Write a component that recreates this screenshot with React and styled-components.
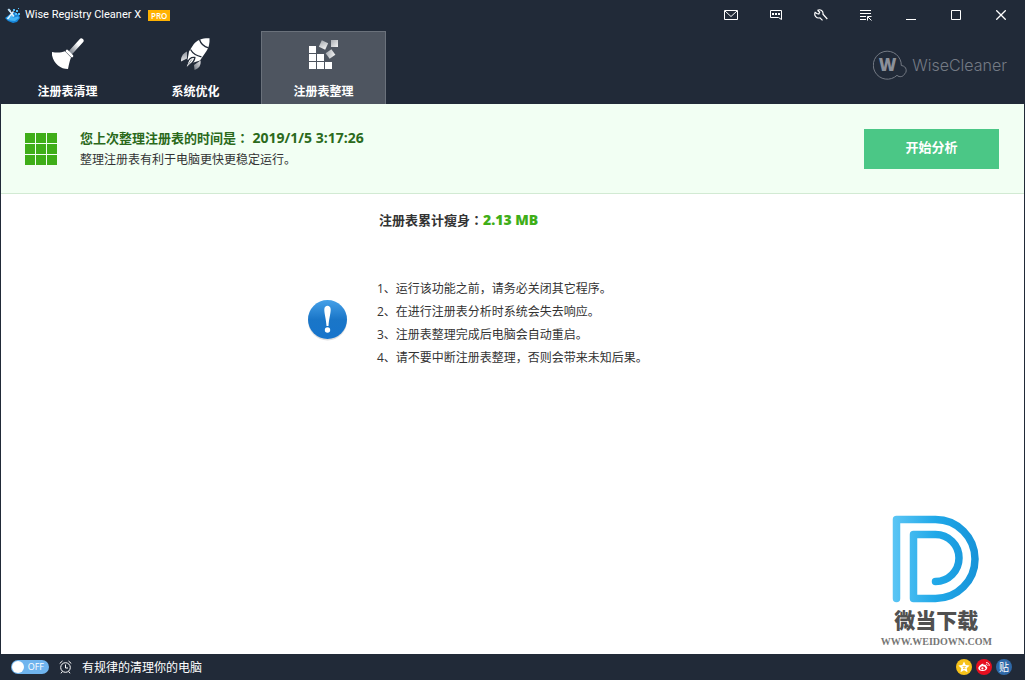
import { useState } from "react";
import styled, { createGlobalStyle } from "styled-components";

const GlobalStyle = createGlobalStyle`
  :root {
    --color-navy: #212a38;
    --color-navy-light: #4e5560;
    --color-mint: #f2fff3;
    --color-green: #3fae18;
    --color-text: #333;
    --font-ui: "Open Sans", "Noto Sans CJK SC", sans-serif;
  }

  * {
    box-sizing: border-box;
  }

  body {
    margin: 0;
    background-color: #fff;
    color: var(--color-text);
    font-family: var(--font-ui);
    font-size: 12px;
  }

  button {
    font-family: inherit;
    border: none;
    padding: 0;
    cursor: pointer;
  }

  svg {
    display: block;
    flex-shrink: 0;
  }
`;

const Window = styled.div`
  position: relative;
  display: flex;
  flex-direction: column;
  min-height: 100vh;
  border: solid var(--color-navy);
  border-width: 0 1px;
`;

const Header = styled.header`
  background-color: var(--color-navy);
  color: #fff;
`;

const TitleBar = styled.div`
  display: flex;
  align-items: center;
  justify-content: space-between;
  height: 30px;
  padding: 0 1px 0 4px;
`;

const AppName = styled.h1`
  display: flex;
  align-items: center;
  gap: 4px;
  margin: 0;
  font-family: Roboto, sans-serif;
  font-size: 11px;
  line-height: 16px;
  font-weight: 400;
`;

const ProBadge = styled.span`
  margin-left: 3px;
  padding: 0 3px;
  background-color: #ffb101;
  font-family: var(--font-ui);
  font-size: 8px;
  line-height: 11px;
  font-weight: 600;
`;

const WindowButtons = styled.div`
  display: flex;
`;

const WindowButton = styled.button`
  display: flex;
  align-items: center;
  justify-content: center;
  width: 45px;
  height: 30px;
  background: none;
  color: #fff;

  &:hover {
    background-color: var(--color-navy-light);
  }
`;

const NavBar = styled.div`
  display: flex;
  align-items: stretch;
  justify-content: space-between;
  height: 74px;
  padding: 1px 17px 0 4px;
`;

const Tabs = styled.nav`
  display: flex;
  gap: 3px;
`;

const Tab = styled.button`
  display: flex;
  flex-direction: column;
  align-items: center;
  gap: 11px;
  width: 125px;
  padding-top: 6px;
  border: solid ${({ $active }) => ($active ? "#6a717b" : "transparent")};
  border-width: 1px 1px 0;
  background-color: ${({ $active }) => ($active ? "var(--color-navy-light)" : "transparent")};
  color: #fff;
  font-size: 12px;
  line-height: 22px;
  font-weight: 700;
`;

const Brand = styled.div`
  display: flex;
  align-items: center;
  gap: 5px;
  padding-bottom: 6px;
  color: #747a84;
  font-family: Inter, "Liberation Sans", sans-serif;
  font-size: 16px;
  font-weight: 300;
`;

const Banner = styled.section`
  display: flex;
  align-items: center;
  gap: 23px;
  height: 90px;
  padding: 0 25px 0 24px;
  background-color: var(--color-mint);
  border-bottom: 1px solid #d2ead3;
`;

const BannerText = styled.div`
  flex: 1;
  line-height: 22px;
`;

const BannerTitle = styled.h2`
  margin: 0;
  color: #2b6a1b;
  font-size: 13px;
  font-weight: 700;

  time {
    font-size: 14px;
  }
`;

const BannerNote = styled.p`
  margin: 0;
`;

const Colon = styled.span`
  font-family: "Noto Sans CJK JP", sans-serif;
`;

const AnalyzeButton = styled.button`
  width: 135px;
  height: 40px;
  padding-bottom: 4px;
  background-color: #4bc786;
  color: #fff;
  font-size: 13px;
  font-weight: 700;
`;

const Main = styled.main`
  flex: 1;
  padding: 15px 0 0 30%;
`;

const Total = styled.p`
  margin: 0 0 46px 71px;
  font-size: 13px;
  line-height: 22px;
  font-weight: 700;

  strong {
    color: var(--color-green);
    font-size: 14px;
  }
`;

const Notice = styled.div`
  display: flex;
  align-items: center;
  gap: 25px;
`;

const Tips = styled.ol`
  margin: 0;
  padding: 0;
  list-style: none;
  line-height: 23px;
`;

const Watermark = styled.div`
  position: absolute;
  right: 32px;
  bottom: 32px;
  display: flex;
  flex-direction: column;
  align-items: center;
  color: #505050;
`;

const WatermarkName = styled.span`
  padding: 3px 0 4px;
  font-family: "Noto Sans CJK SC", sans-serif;
  font-size: 21px;
  line-height: 26px;
  font-weight: 900;
`;

const WatermarkUrl = styled.span`
  color: #777;
  font-family: "Liberation Serif", serif;
  font-size: 10px;
  line-height: 12px;
  font-weight: 700;
`;

const Footer = styled.footer`
  display: flex;
  align-items: center;
  gap: 10px;
  height: 26px;
  padding: 0 12px 0 10px;
  background-color: var(--color-navy);
  color: #fff;
`;

const Schedule = styled.label`
  display: flex;
  align-items: center;
  gap: 10px;
  flex: 1;
`;

const Switch = styled.span`
  position: relative;
  display: flex;
  align-items: center;
  justify-content: ${({ $on }) => ($on ? "flex-start" : "flex-end")};
  width: 38px;
  height: 14px;
  padding: 0 5px;
  border-radius: 7px;
  background-color: #6fb4ee;
  font-size: 9px;
  line-height: 14px;

  &::before {
    content: "";
    position: absolute;
    top: 1px;
    left: ${({ $on }) => ($on ? "25px" : "1px")};
    width: 12px;
    height: 12px;
    border-radius: 50%;
    background-color: #fff;
  }

  input {
    position: absolute;
    inset: 0;
    width: 100%;
    height: 100%;
    margin: 0;
    opacity: 0;
  }
`;

const Socials = styled.div`
  display: flex;
  gap: 4px;
`;

const SocialLink = styled.a`
  display: flex;
  align-items: center;
  justify-content: center;
  width: 16px;
  height: 16px;
  border-radius: 50%;
  background-color: ${({ $color }) => $color};
  color: #fff;
  font-size: 10px;
  line-height: 16px;
  text-decoration: none;
`;

function AppLogo() {
  return (
    <svg width="16" height="16" viewBox="0 0 16 16">
      <path d="M5 7l5-2 4 3 1 3-3 4-4 1-5-2-3-3z" fill="#1785d8" />
      <path d="M1 11l3-1.500 5 1 4-1 1 1.500-4 3-5-.5z" fill="#45b5f5" />
      <path d="M8 2h2v2H8zM11 3h2v2h-2zM10 6h2v2h-2zM13 6h2v2h-2zM13 1h1v1h-1zM6 8h2v2H6z" fill="#52bdf8" />
      <path d="M2.500 12L8.500 4.500M4 3l5 6.500" stroke="#e2f2fb" strokeWidth="1.500" />
      <path d="M2.500 2.500L4 1.500 6 3.500 4.500 5z" fill="#b9def5" />
    </svg>
  );
}

function MailIcon() {
  return (
    <svg width="14" height="10" viewBox="0 0 14 10" fill="none" stroke="currentColor">
      <path d="M.5.5h13v9H.5z" />
      <path d="M1 1l6 5.5L13 1" />
    </svg>
  );
}

function ChatIcon() {
  return (
    <svg width="12" height="10" viewBox="0 0 12 10" fill="none" stroke="currentColor">
      <path d="M.5.5h11v9L8.5 7.500H.5z" />
      <path d="M2 4h2M5 4h2M8 4h2" strokeWidth="2" />
    </svg>
  );
}

function WrenchIcon() {
  return (
    <svg width="14" height="12" viewBox="0 0 14 12" fill="none" stroke="currentColor" strokeWidth="1.200">
      <path d="M3.500 1.200C6.500-.2 9.500 2 9 5.200L13.300 10M3.500 1.200L5.700 3.200 4.800 5 2.800 4.500 1.200 3.300C-.3 6.500 2.500 9.800 6 8.800L8.500 11.300" />
    </svg>
  );
}

function MenuIcon() {
  return (
    <svg width="12" height="11" viewBox="0 0 12 11" fill="none" stroke="currentColor">
      <path d="M0 .5h11M0 3.500h11M0 6.500h6M0 9.500h6M7.500 10.500V6.500H11.500M8 7l3.500 3.500" />
    </svg>
  );
}

function MinimizeIcon() {
  return (
    <svg width="10" height="10" viewBox="0 0 10 10">
      <path d="M0 9.500h10" stroke="currentColor" />
    </svg>
  );
}

function MaximizeIcon() {
  return (
    <svg width="10" height="10" viewBox="0 0 10 10">
      <path d="M.5.5h9v9h-9z" fill="none" stroke="currentColor" />
    </svg>
  );
}

function CloseIcon() {
  return (
    <svg width="10" height="10" viewBox="0 0 10 10">
      <path d="M.3.3l9.400 9.400M9.700.3L.3 9.700" stroke="currentColor" strokeWidth="1.300" />
    </svg>
  );
}

function BroomIcon() {
  return (
    <svg width="32" height="32" viewBox="0 0 32 32">
      <defs>
        <linearGradient id="broomHandle" x1="1" y1="0" x2="0" y2="1">
          <stop offset="0.3" stopColor="#fff" />
          <stop offset="1" stopColor="#8d939c" />
        </linearGradient>
      </defs>
      <path d="M19.500 13.500L29.300 2.800" stroke="url(#broomHandle)" strokeWidth="4.600" strokeLinecap="round" />
      <path d="M15 13l5 5" stroke="#fff" strokeWidth="2.600" strokeLinecap="round" />
      <path d="M-.5 14c5.500 1 9.500.8 13.500-.7l6 6.200c-1.500 3.500-2 7-3 11.500C8 31 .5 25-.5 14z" fill="#fff" />
    </svg>
  );
}

function RocketIcon() {
  return (
    <svg width="32" height="32" viewBox="0 0 32 32">
      <defs>
        <linearGradient id="rocketFin" x1="0" y1="0" x2="0" y2="1">
          <stop offset="0" stopColor="#8d929b" />
          <stop offset="1" stopColor="#e6e7e9" />
        </linearGradient>
        <linearGradient id="rocketFinLow" x1="1" y1="0" x2="0" y2="1">
          <stop offset="0" stopColor="#e8e9eb" />
          <stop offset="1" stopColor="#6d737e" />
        </linearGradient>
      </defs>
      <path d="M7 13.500c-4 2-6.300 5-6 10l6-3z" fill="url(#rocketFin)" />
      <path d="M20.500 22.500c.8 4.500-1.500 8-6 9.500l-.5-5z" fill="url(#rocketFinLow)" />
      <path
        d="M29.500.3C23 0 17 1.800 13.500 6.500L9 13.500 7.500 22l6 2.500L20 22.500l6.500-9.500C29 9.500 29.800 5 29.500.3z"
        fill="#fff"
      />
      <path
        d="M19.500 1.500C20.800 5.800 23.500 8.500 28.500 9.800M10.500 11.500C12.500 15 16 17.800 21.500 18.800"
        fill="none"
        stroke="#212a38"
        strokeWidth="1.300"
      />
      <path
        d="M14.800 19.500c-3.500-.5-6 1.500-7.200 5L5 31.500l5.500-5.200c2.500-2 4.300-4 4.300-6.800z"
        fill="#fff"
        stroke="#212a38"
        strokeWidth="1.400"
      />
      <path d="M11.800 21.500L8.300 26.500" stroke="#858b94" />
    </svg>
  );
}

function DefragIcon() {
  return (
    <svg width="32" height="32" viewBox="0 0 32 32">
      <defs>
        <linearGradient id="block" x1="0" y1="0" x2="1" y2="1">
          <stop offset="0" stopColor="#a9adb2" />
          <stop offset="1" stopColor="#f4f4f5" />
        </linearGradient>
      </defs>
      <path d="M1 8h7v7H1zM1 16h7v7H1zM1 24h7v7H1zM9 16h7v7H9zM9 24h7v7H9zM17 24h7v7h-7z" fill="#fff" />
      <g fill="url(#block)">
        <path d="M23 2h7v7h-7z" />
        <path d="M12 3.500h7v7h-7z" transform="rotate(25 15.500 7)" />
        <path d="M19 12.500h7v7h-7z" transform="rotate(-35 22.500 16)" />
      </g>
    </svg>
  );
}

function BrandLogo() {
  return (
    <svg width="34" height="30" viewBox="0 0 34 30">
      <path
        d="M28.300 15.500A14 14 0 1 0 24 25.300c2.500 2.500 6.500 1.200 7-.8 3.500-2 3-8.500-2.700-9z"
        fill="none"
        stroke="currentColor"
      />
      <text
        x="14.500"
        y="21"
        textAnchor="middle"
        fill="#8b9099"
        fontFamily="Open Sans, sans-serif"
        fontSize="17"
        fontWeight="800"
      >
        W
      </text>
    </svg>
  );
}

function GridIcon() {
  return (
    <svg width="32" height="32" viewBox="0 0 32 32">
      <path
        d="M0 0h10v10H0zM11 0h10v10H11zM22 0h10v10H22zM0 11h10v10H0zM11 11h10v10H11zM22 11h10v10H22zM0 22h10v10H0zM11 22h10v10H11zM22 22h10v10H22z"
        fill="#3fae18"
      />
    </svg>
  );
}

function AlertIcon() {
  return (
    <svg width="44" height="50" viewBox="0 0 44 50">
      <defs>
        <linearGradient id="alertFill" x1="0" y1="0" x2="0" y2="1">
          <stop offset="0" stopColor="#45a0e8" />
          <stop offset="0.500" stopColor="#1a76c8" />
          <stop offset="1" stopColor="#1674cc" />
        </linearGradient>
      </defs>
      <circle cx="19.500" cy="23" r="19.500" fill="#000" opacity="0.130" />
      <circle cx="19.500" cy="21.500" r="19.500" fill="url(#alertFill)" />
      <path d="M16.300 11.500c0-5 6.400-5 6.400 0 0 4-1.700 9-2.200 16.500h-2C18 20.500 16.300 15.500 16.300 11.500z" fill="#fff" />
      <circle cx="19.500" cy="32" r="2.700" fill="#fff" />
    </svg>
  );
}

function WatermarkLogo() {
  return (
    <svg width="88" height="88" viewBox="0 0 88 88">
      <defs>
        <linearGradient id="letterD" gradientUnits="userSpaceOnUse" x1="0" y1="0" x2="88" y2="0">
          <stop offset="0" stopColor="#5cc6f5" />
          <stop offset="0.500" stopColor="#20a8e8" />
          <stop offset="1" stopColor="#1792d8" />
        </linearGradient>
      </defs>
      <path
        d="M4.500 83.500V4.500H43.500A39.500 39.500 0 0 1 43.500 83.500H21.500V19.500H43.500A23.500 23.500 0 0 1 43.500 66.500"
        fill="none"
        stroke="url(#letterD)"
        strokeWidth="7.500"
        strokeLinecap="round"
        strokeLinejoin="round"
      />
    </svg>
  );
}

function AlarmIcon() {
  return (
    <svg width="13" height="14" viewBox="0 0 13 14" fill="none" stroke="currentColor">
      <circle cx="6.500" cy="7.500" r="4.800" />
      <path d="M6.500 4.500v3.500H9M.7 3.500L3.500 1M12.300 3.500L9.500 1M3.300 11.500L2 13.300M9.700 11.500l1.300 1.800" />
    </svg>
  );
}

function StarIcon() {
  return (
    <svg width="12" height="12" viewBox="0 0 12 12">
      <path
        d="M6 .5l1.700 3.600 3.900.5-2.900 2.700.8 3.900L6 9.300l-3.500 1.900.8-3.900L.4 4.600l3.900-.5z"
        fill="#fff"
      />
      <path d="M4.500 5.500h3L5 7.500h2.500" fill="none" stroke="#f7c21a" strokeWidth="0.700" />
    </svg>
  );
}

function WeiboIcon() {
  return (
    <svg width="12" height="10" viewBox="0 0 12 10">
      <path
        d="M4.500 1.800c.8-.2 1.200.3 1 1.200 1.500-.6 2.700-.3 2.400.9 3 1.200.8 5-3.200 5C2 8.900.3 7.700.3 6.200S2.800 2.200 4.500 1.800z"
        fill="#fff"
      />
      <ellipse cx="4.700" cy="6.200" rx="2.700" ry="1.900" fill="#e60f20" />
      <circle cx="4.400" cy="6.400" r="1.100" fill="#fff" />
      <path d="M8 .7c2-.3 3.600 1.200 3.100 3.200M8.200 2.500c.9 0 1.200.5 1 1.200" fill="none" stroke="#fff" />
    </svg>
  );
}

const windowActions = [
  { label: "邮件", icon: <MailIcon /> },
  { label: "反馈", icon: <ChatIcon /> },
  { label: "设置", icon: <WrenchIcon /> },
  { label: "菜单", icon: <MenuIcon /> },
  { label: "最小化", icon: <MinimizeIcon /> },
  { label: "最大化", icon: <MaximizeIcon /> },
  { label: "关闭", icon: <CloseIcon /> },
];

const tabs = [
  { id: "clean", label: "注册表清理", icon: <BroomIcon /> },
  { id: "tuneup", label: "系统优化", icon: <RocketIcon /> },
  { id: "defrag", label: "注册表整理", icon: <DefragIcon /> },
];

const tips = [
  "1、运行该功能之前，请务必关闭其它程序。",
  "2、在进行注册表分析时系统会失去响应。",
  "3、注册表整理完成后电脑会自动重启。",
  "4、请不要中断注册表整理，否则会带来未知后果。",
];

export default function App() {
  const [activeTab, setActiveTab] = useState("defrag");
  const [scheduled, setScheduled] = useState(false);

  return (
    <>
      <GlobalStyle />
      <Window lang="zh-CN">
        <Header>
          <TitleBar>
            <AppName>
              <AppLogo />
              Wise Registry Cleaner X
              <ProBadge>PRO</ProBadge>
            </AppName>
            <WindowButtons>
              {windowActions.map(({ label, icon }) => (
                <WindowButton key={label} type="button" aria-label={label}>
                  {icon}
                </WindowButton>
              ))}
            </WindowButtons>
          </TitleBar>
          <NavBar>
            <Tabs>
              {tabs.map(({ id, label, icon }) => (
                <Tab key={id} type="button" $active={id === activeTab} onClick={() => setActiveTab(id)}>
                  {icon}
                  {label}
                </Tab>
              ))}
            </Tabs>
            <Brand>
              <BrandLogo />
              WiseCleaner
            </Brand>
          </NavBar>
        </Header>

        <Banner>
          <GridIcon />
          <BannerText>
            <BannerTitle>
              您上次整理注册表的时间是<Colon lang="ja">：</Colon> <time>2019/1/5 3:17:26</time>
            </BannerTitle>
            <BannerNote>整理注册表有利于电脑更快更稳定运行。</BannerNote>
          </BannerText>
          <AnalyzeButton type="button">开始分析</AnalyzeButton>
        </Banner>

        <Main>
          <Total>
            注册表累计瘦身<Colon lang="ja">：</Colon>
            <strong>2.13 MB</strong>
          </Total>
          <Notice>
            <AlertIcon />
            <Tips>
              {tips.map((tip) => (
                <li key={tip}>{tip}</li>
              ))}
            </Tips>
          </Notice>
        </Main>

        <Watermark>
          <WatermarkLogo />
          <WatermarkName>微当下载</WatermarkName>
          <WatermarkUrl>WWW.WEIDOWN.COM</WatermarkUrl>
        </Watermark>

        <Footer>
          <Schedule>
            <Switch $on={scheduled}>
              <input type="checkbox" checked={scheduled} onChange={(e) => setScheduled(e.target.checked)} />
              {scheduled ? "ON" : "OFF"}
            </Switch>
            <AlarmIcon />
            有规律的清理你的电脑
          </Schedule>
          <Socials>
            <SocialLink href="#qzone" aria-label="QQ空间" $color="#f7c21a">
              <StarIcon />
            </SocialLink>
            <SocialLink href="#weibo" aria-label="微博" $color="#e60f20">
              <WeiboIcon />
            </SocialLink>
            <SocialLink href="#tieba" $color="#2f69a8">
              贴
            </SocialLink>
          </Socials>
        </Footer>
      </Window>
    </>
  );
}
